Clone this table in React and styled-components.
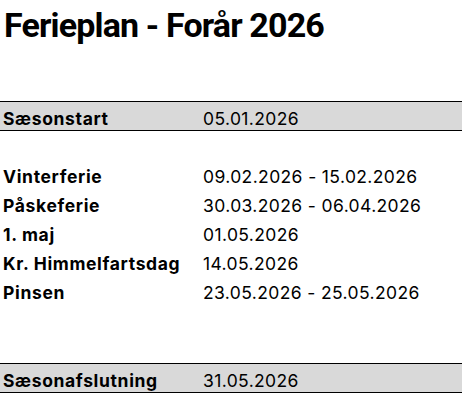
import React from "react";
import styled, { createGlobalStyle } from "styled-components";

const GlobalStyle = createGlobalStyle`
  body {
    margin: 0;
    background: #fff;
    font-family: "Inter", "Liberation Sans", sans-serif;
    color: #000;
  }
`;

const holidays = [
  { label: "Vinterferie", date: "09.02.2026 - 15.02.2026" },
  { label: "Påskeferie", date: "30.03.2026 - 06.04.2026" },
  { label: "1. maj", date: "01.05.2026" },
  { label: "Kr. Himmelfartsdag", date: "14.05.2026" },
  { label: "Pinsen", date: "23.05.2026 - 25.05.2026" },
];

export default function App() {
  return (
    <>
      <GlobalStyle />
      <Sheet>
        <Title>Ferieplan - Forår 2026</Title>

        <Row $band>
          <Label>Sæsonstart</Label>
          <DateCell>05.01.2026</DateCell>
        </Row>

        <Spacer $h={31} />

        {holidays.map((h) => (
          <Row key={h.label}>
            <Label>{h.label}</Label>
            <DateCell>{h.date}</DateCell>
          </Row>
        ))}

        <Spacer $h={56} />

        <Row $band>
          <Label>Sæsonafslutning</Label>
          <DateCell>31.05.2026</DateCell>
        </Row>
      </Sheet>
    </>
  );
}

const Sheet = styled.div`
  width: 462px;
  display: flex;
  flex-direction: column;
`;

const Title = styled.h1`
  margin: 0;
  height: 101px;
  padding: 5px 0 0 4px;
  box-sizing: border-box;
  font-family: "Roboto", "Inter", sans-serif;
  font-size: 34px;
  line-height: 40px;
  font-weight: 700;
  letter-spacing: -0.85px;
`;

const Row = styled.div`
  display: grid;
  grid-template-columns: 200px 1fr;
  align-items: ${({ $band }) => ($band ? "end" : "center")};
  box-sizing: border-box;
  height: ${({ $band }) => ($band ? "30px" : "29px")};
  padding-left: 3px;
  font-size: 17.5px;
  line-height: 22px;
  background: ${({ $band }) => ($band ? "#d9d9d9" : "transparent")};
  border-top: ${({ $band }) => ($band ? "1px solid #000" : "none")};
  border-bottom: ${({ $band }) => ($band ? "1px solid #000" : "none")};
`;

const Label = styled.div`
  font-weight: 700;
  letter-spacing: 0.65px;
  white-space: nowrap;
`;

const DateCell = styled.div`
  letter-spacing: 0.38px;
  white-space: nowrap;
`;

const Spacer = styled.div`
  height: ${({ $h }) => $h}px;
`;
